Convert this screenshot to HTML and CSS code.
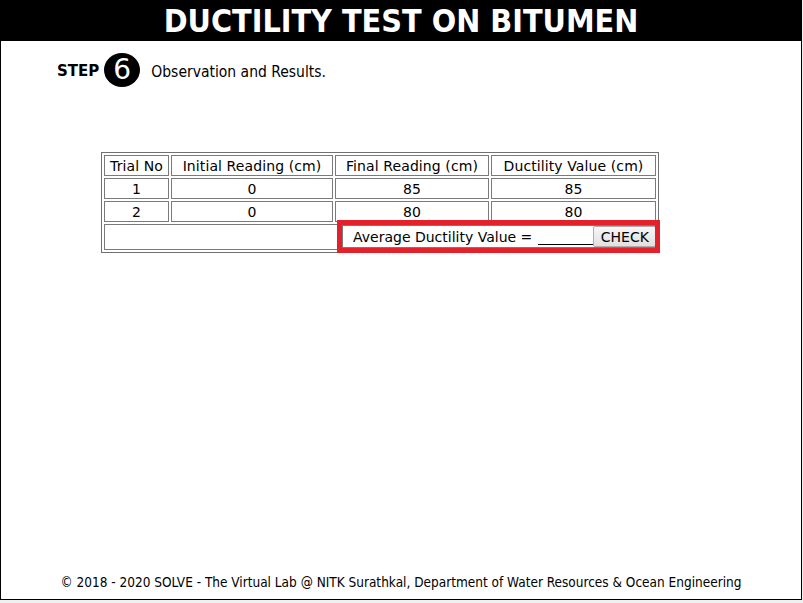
FILE: index.html
```html
<!DOCTYPE html>
<html>
<head>
<meta charset="utf-8">
<title>Ductility Test on Bitumen</title>
<link rel="stylesheet" href="styles.css">
</head>
<body>
<div class="frame">
  <header class="header">DUCTILITY TEST ON BITUMEN</header>
  <div class="step">
    <span class="step-label">STEP</span>
    <span class="step-num">6</span>
    <span class="step-text">Observation and Results.</span>
  </div>
  <table class="results">
    <tr>
      <td class="c1">Trial No</td>
      <td class="c2">Initial Reading (cm)</td>
      <td class="c3">Final Reading (cm)</td>
      <td class="c4">Ductility Value (cm)</td>
    </tr>
    <tr>
      <td>1</td><td>0</td><td>85</td><td>85</td>
    </tr>
    <tr>
      <td>2</td><td>0</td><td>80</td><td>80</td>
    </tr>
    <tr>
      <td colspan="4" class="avg-cell">
        <div class="avg">
          <span class="avg-label">Average Ductility Value =</span>
          <input class="avg-input" type="text">
          <button class="check">CHECK</button>
        </div>
      </td>
    </tr>
  </table>
  <footer class="footer">© 2018 - 2020 SOLVE - The Virtual Lab @ NITK Surathkal, Department of Water Resources &amp; Ocean Engineering</footer>
</div>
</body>
</html>
```

FILE: styles.css
```css
html, body {
  margin: 0;
  padding: 0;
  background: #f0f0f0;
}

.frame {
  width: 800px;
  height: 599px;
  border: 1px solid #000;
  border-top: 0;
  background: #fff;
  overflow: hidden;
  display: flex;
  flex-direction: column;
  font-family: "DejaVu Sans", Verdana, sans-serif;
  color: #000;
}

.header {
  background: #000;
  color: #fff;
  height: 41px;
  line-height: 42px;
  text-align: center;
  font-family: "DejaVu Sans Condensed", "DejaVu Sans", sans-serif;
  font-weight: bold;
  font-size: 32px;
}

.step {
  display: flex;
  align-items: center;
  margin-top: 12px;
  padding-left: 56px;
  height: 34px;
}

.step-label {
  font-weight: bold;
  font-size: 15px;
  padding-top: 1px;
}

.step-num {
  width: 36px;
  height: 34px;
  border-radius: 50%;
  background: #000;
  color: #fff;
  font-size: 28px;
  line-height: 34px;
  text-align: center;
  margin-left: 5px;
}

.step-text {
  font-family: "DejaVu Sans Condensed", "DejaVu Sans", sans-serif;
  font-size: 15.5px;
  margin-left: 11px;
  padding-top: 4px;
}

.results {
  align-self: flex-start;
  margin: 65px 0 0 100px;
  border: 1px solid #707070;
  border-spacing: 2px;
  font-size: 14px;
  letter-spacing: 0.1px;
}

.results td {
  border: 1px solid #7a7a7a;
  text-align: center;
  padding: 0 4px;
  height: 19px;
  line-height: 18px;
}

.results .c1 { width: 55px; }
.results .c2 { width: 152px; }
.results .c3 { width: 144px; }
.results .c4 { width: 155px; }

.results td.avg-cell {
  padding: 0;
  height: 24px;
  vertical-align: top;
}

.avg {
  display: flex;
  align-items: center;
  margin-left: auto;
  width: 311px;
  height: 21px;
  border: 1px solid #7a7a7a;
  outline: 5px solid #e3212b;
  text-align: left;
  letter-spacing: 0;
}

.avg-label {
  margin-left: 10px;
  white-space: pre;
  flex-shrink: 0;
}

.avg-input {
  flex-shrink: 0;
  width: 55px;
  height: 16px;
  margin: 0 0 0 6px;
  padding: 0;
  border: 0;
  border-bottom: 1px solid #000;
  background: transparent;
  outline: none;
}

.check {
  flex-shrink: 0;
  margin: 0;
  width: 63px;
  height: 21px;
  padding: 0;
  border: 1px solid #adadad;
  border-radius: 2px;
  background: linear-gradient(#f7f7f7, #e0e0e0);
  font-family: "DejaVu Sans", Verdana, sans-serif;
  font-size: 14px;
  color: #000;
}

.footer {
  margin-top: auto;
  margin-bottom: 9px;
  text-align: center;
  font-family: "DejaVu Sans Condensed", "DejaVu Sans", sans-serif;
  font-size: 13.5px;
}
```
